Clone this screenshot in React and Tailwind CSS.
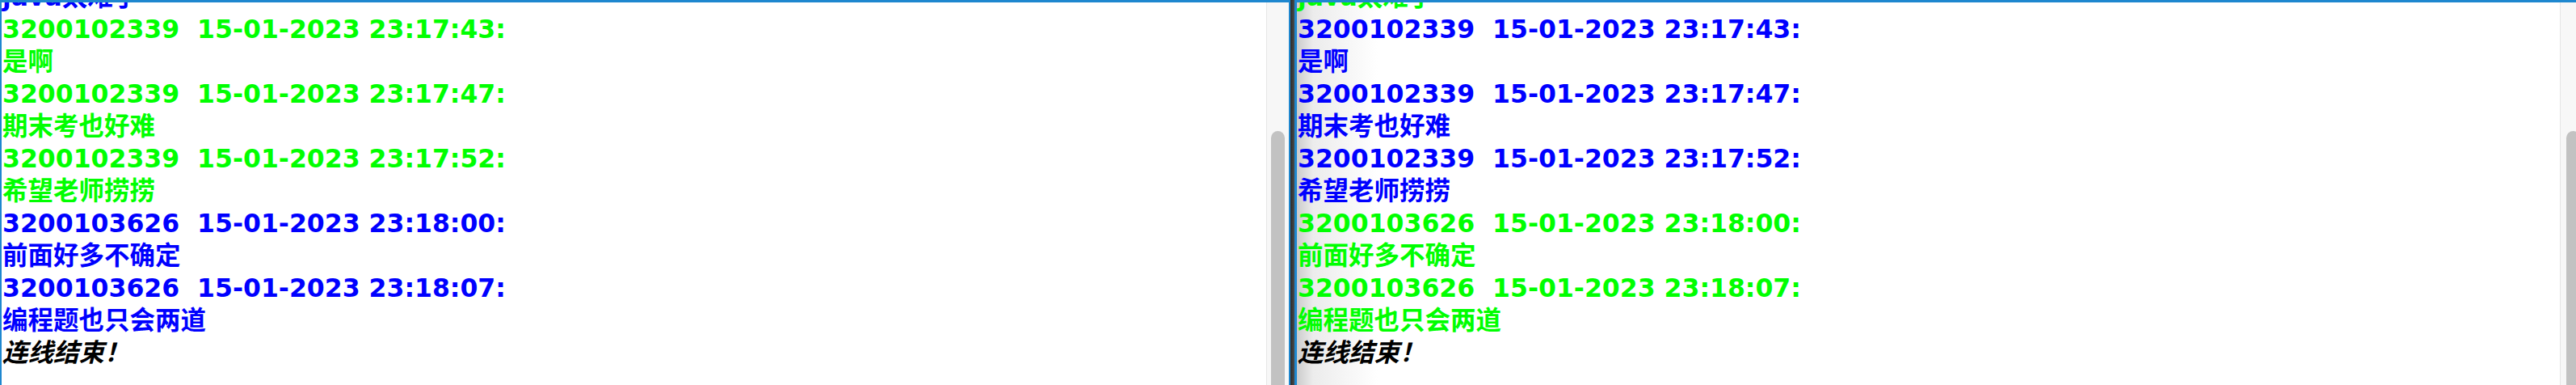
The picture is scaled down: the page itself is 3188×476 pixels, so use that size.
const SELF_COLOR = 'text-[#00ff00]';
const OTHER_COLOR = 'text-[#0000ff]';

const messages = [
  { from: '3200103626', text: 'java太难了', headless: true },
  { from: '3200102339', time: '15-01-2023 23:17:43', text: '是啊' },
  { from: '3200102339', time: '15-01-2023 23:17:47', text: '期末考也好难' },
  { from: '3200102339', time: '15-01-2023 23:17:52', text: '希望老师捞捞' },
  { from: '3200103626', time: '15-01-2023 23:18:00', text: '前面好多不确定' },
  { from: '3200103626', time: '15-01-2023 23:18:07', text: '编程题也只会两道' },
];

const ChatPane = ({ self, className, bodyClass, thumbClass }) => {
  return (
    <div className={`flex h-full border-t-[3px] border-[#1e87cf] ${className}`}>
      <div className={`flex-1 overflow-hidden ${bodyClass}`}>
        <div className="-mt-[27px] font-['DejaVu_Sans','Noto_Sans_CJK_SC',sans-serif] text-[31.5px] leading-[40px] font-bold">
          {messages.map((m, i) => {
            const color = m.from === self ? SELF_COLOR : OTHER_COLOR;
            return (
              <div key={i} className={color}>
                {!m.headless && (
                  <div className="whitespace-pre">{`${m.from}  ${m.time}:`}</div>
                )}
                <div>{m.text}</div>
              </div>
            );
          })}
          <div className="italic text-black">连线结束！</div>
        </div>
      </div>
      <div className="w-[28px] shrink-0 border-l border-[#e6e6e6] bg-[#f7f7f7] pt-[159px]">
        <div className={`w-[17px] h-full rounded-t-full bg-[#c2c2c2] ${thumbClass}`} />
      </div>
    </div>
  );
};

const App = () => {
  return (
    <div className="flex w-[3188px] h-[476px] overflow-hidden bg-[#363636]">
      <ChatPane
        self="3200102339"
        className="w-[1597px] shrink-0 border-l-2 border-r-2 bg-white"
        bodyClass="pl-px bg-white"
        thumbClass="ml-[5px]"
      />
      <div className="w-[5px] shrink-0 bg-gradient-to-r from-[#2c2c2c] to-[#4a4a4a]" />
      <ChatPane
        self="3200103626"
        className="w-[1594px] shrink-0 border-l-[3px] bg-white"
        bodyClass="pl-[1px] bg-[linear-gradient(to_right,#cccccc,#ececec_20px,#ffffff_100px)]"
        thumbClass="ml-[7px]"
      />
    </div>
  );
};

export default App;
